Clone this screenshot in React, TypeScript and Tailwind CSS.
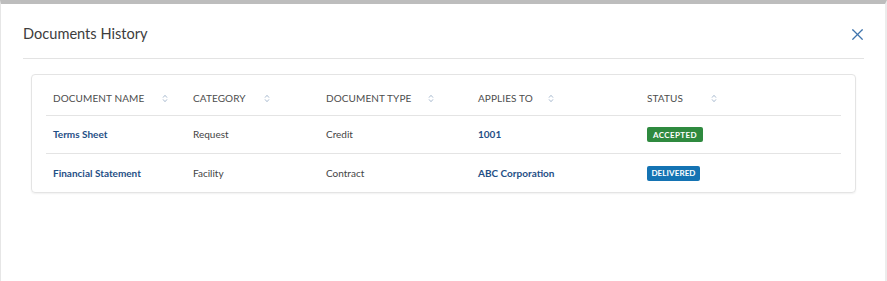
import { X } from "lucide-react";

const SortIcon = ({ className = "" }: { className?: string }) => (
  <svg width="6" height="9" viewBox="0 0 6 9" className={className} fill="none">
    <path d="M1 3.6 L3 1.3 L5 3.6" stroke="#a9bbd0" strokeWidth="1" />
    <path d="M1 5.4 L3 7.7 L5 5.4" stroke="#a9bbd0" strokeWidth="1" />
  </svg>
);

const columns = [
  { label: "DOCUMENT NAME", width: "w-[140px]", gap: "ml-[18px]" },
  { label: "CATEGORY", width: "w-[133px]", gap: "ml-[18px]" },
  { label: "DOCUMENT TYPE", width: "w-[152px]", gap: "ml-[17px]" },
  { label: "APPLIES TO", width: "w-[169px]", gap: "ml-[15px]" },
  { label: "STATUS", width: "flex-1", gap: "ml-[28px]" },
];

const rows = [
  {
    name: "Terms Sheet",
    category: "Request",
    type: "Credit",
    applies: "1001",
    status: "ACCEPTED",
    badge: "bg-[#2f8a3f] w-[56px] tracking-[0.4px]",
  },
  {
    name: "Financial Statement",
    category: "Facility",
    type: "Contract",
    applies: "ABC Corporation",
    status: "DELIVERED",
    badge: "bg-[#1473b3] w-[53px] tracking-[0.1px]",
  },
];

export default function App() {
  return (
    <div
      className="w-[887px] h-[281px] bg-white border-t-4 border-t-[#bdbdbd] border-l border-l-[#e6e6e6] border-r-2 border-r-[#ececec] overflow-hidden"
      style={{ fontFamily: "Lato, 'Open Sans', sans-serif" }}
    >
      <div className="pl-[22px] pr-[21px]">
        {/* Header */}
        <div className="h-[55px] flex items-center justify-between border-b border-[#e3e3e3] pt-[7px]">
          <h2 className="text-[14.6px] text-[#3d3d3d] leading-none">Documents History</h2>
          <X size={19} strokeWidth={1.5} className="text-[#3f74ad] mr-[-3px]" />
        </div>

        {/* Table card */}
        <div className="mt-[15px] mx-[8px] border border-[#e4e4e4] rounded-[4px] shadow-[0_1px_2px_rgba(0,0,0,0.06)] px-[14px] pt-[7px]">
          <div className="flex h-[34px] items-center border-b border-[#e4e4e4] pl-[7px]">
            {columns.map((c) => (
              <div key={c.label} className={`${c.width} flex items-center text-[10px] text-[#4d4d4d] tracking-[0.1px]`}>
                <span>{c.label}</span>
                <SortIcon className={c.gap} />
              </div>
            ))}
          </div>
          {rows.map((r, i) => (
            <div
              key={r.name}
              className={`flex h-[38px] items-center pl-[7px] text-[10px] ${i < rows.length - 1 ? "border-b border-[#e4e4e4]" : ""}`}
            >
              <div className="w-[140px] font-bold text-[#1f4f86]">{r.name}</div>
              <div className="w-[133px] text-[#444]">{r.category}</div>
              <div className="w-[152px] text-[#444]">{r.type}</div>
              <div className="w-[169px] font-bold text-[#1f4f86]">{r.applies}</div>
              <div className="flex-1">
                <span
                  className={`${r.badge} inline-flex items-center justify-center h-[15px] rounded-[2px] text-white text-[8px] font-bold`}
                >
                  {r.status}
                </span>
              </div>
            </div>
          ))}
        </div>
      </div>
    </div>
  );
}
